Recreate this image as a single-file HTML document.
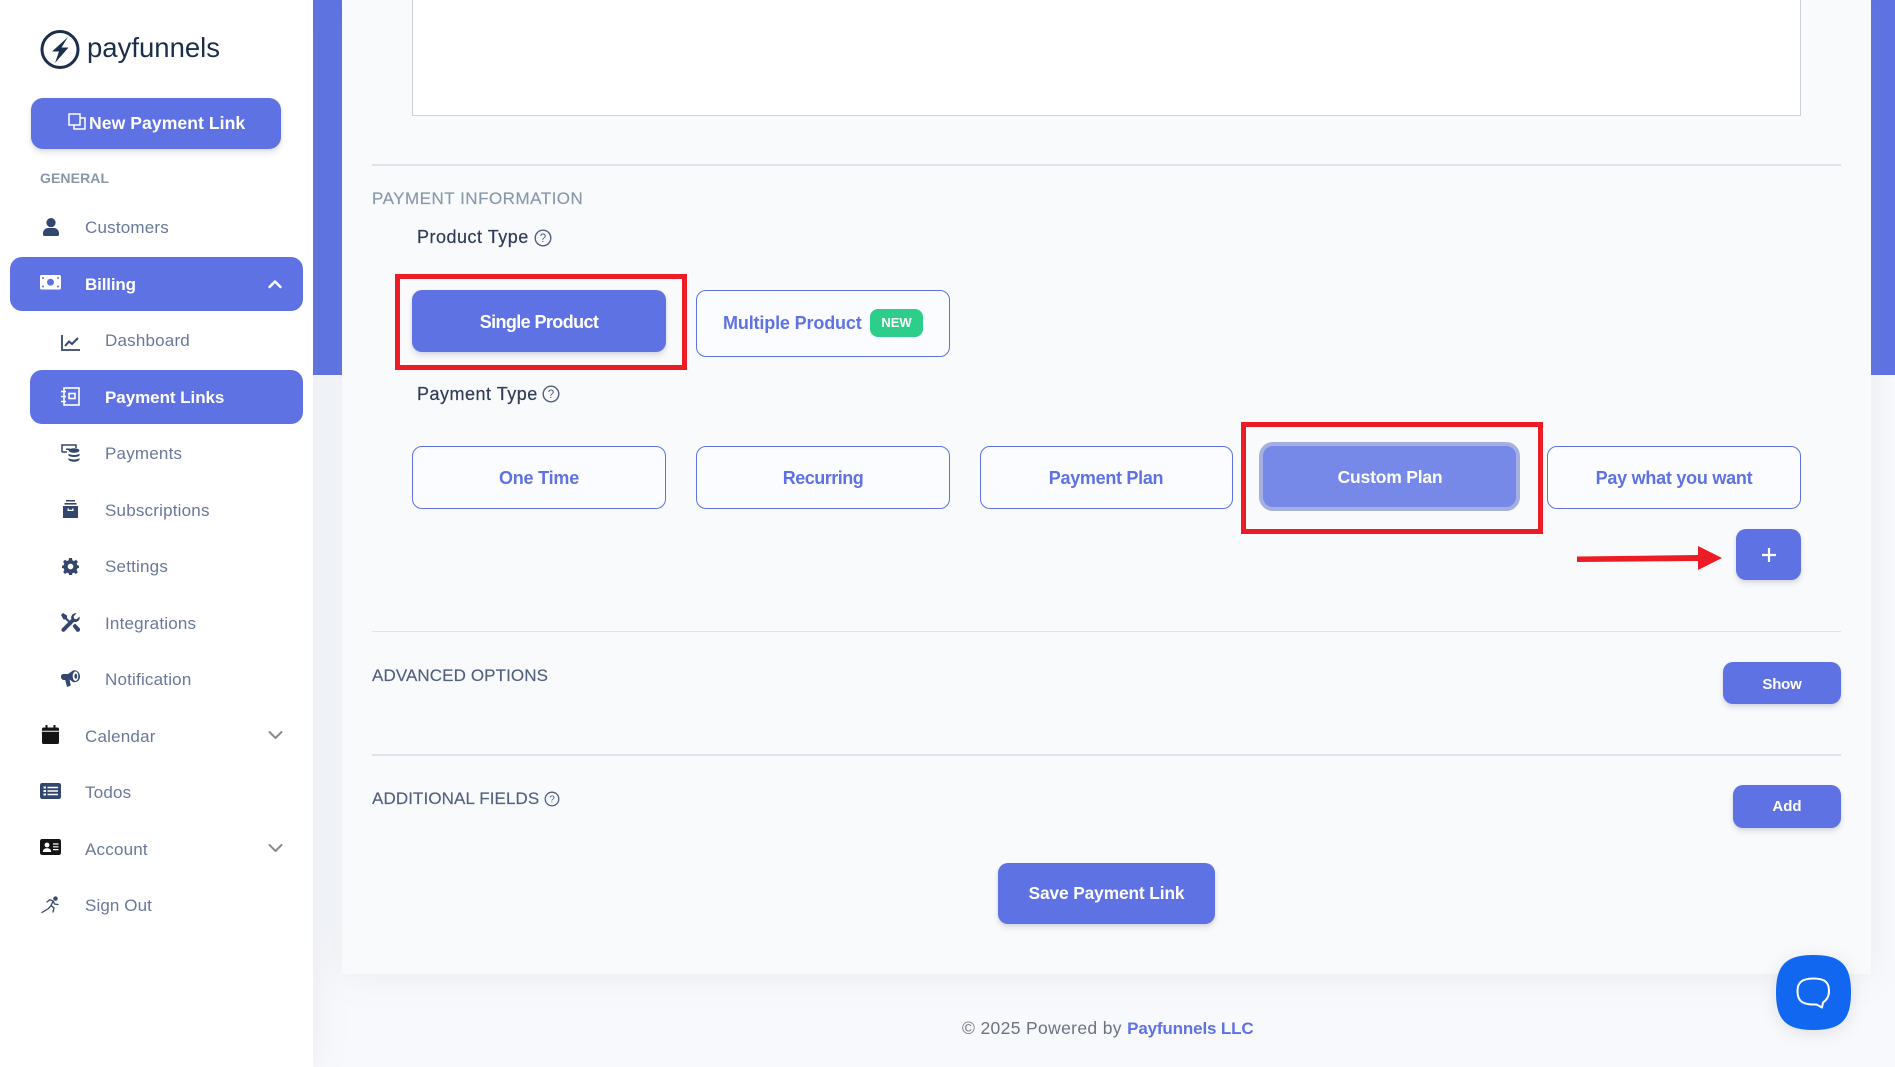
<!DOCTYPE html>
<html lang="en">
<head>
<meta charset="utf-8">
<title>Payfunnels - Payment Link</title>
<style>
*{box-sizing:border-box}
html,body{margin:0;padding:0;width:1895px;height:1067px;overflow:hidden;background:#f8f9fc;font-family:"Liberation Sans",Arial,sans-serif}
.a{position:absolute}
.t{position:absolute;white-space:nowrap;line-height:24px;height:24px}
.c{transform:translateX(-50%)}
.side{left:0;top:0;width:313px;height:1067px;background:#fff;box-shadow:0 0 2rem rgba(136,152,170,.15);z-index:3}
.nav{font-size:17px;color:#69789a;letter-spacing:.2px}
.on{color:#fff;font-weight:700;letter-spacing:-.15px}
.pill{background:#5e72e4;border-radius:12px}
.btn{background:#5e72e4;border-radius:10px;box-shadow:0 4px 6px rgba(50,50,93,.11),0 1px 3px rgba(0,0,0,.08)}
.out{border:1px solid #5e72e4;border-radius:10px;background:#fbfcff}
.bt{font-size:18px;font-weight:700;color:#fff;letter-spacing:-.15px}
.ob{font-size:18px;font-weight:700;color:#5e72e4;letter-spacing:-.2px}
.lab{font-size:18px;color:#2f3b58;letter-spacing:.5px;-webkit-text-stroke:.2px #2f3b58}
.sec{font-size:17px;color:#525f7f;letter-spacing:.1px;-webkit-text-stroke:.15px #525f7f}
.hr{left:372px;width:1469px;height:1.5px;background:#dfe3ec}
.red{border:5px solid #ed1c24}
svg{position:absolute;overflow:visible}
</style>
</head>
<body>

<div class="a" style="left:313px;top:0;width:1582px;height:375px;background:#5e72e4"></div>
<div class="a" style="left:342px;top:0;width:1529px;height:974px;background:#f8fafc;box-shadow:0 0 32px rgba(136,152,170,.15)"></div>

<!-- Sidebar -->
<div class="a side">
  <svg style="left:40px;top:30px" width="40" height="40" viewBox="0 0 40 40">
    <circle cx="20" cy="19.500" r="18" fill="none" stroke="#1b2f4b" stroke-width="3"/>
    <path d="M28 7L12 21.500H19L15 33 28.500 17.500H21.500Z" fill="#1b2f4b"/>
  </svg>
  <div class="t" style="left:87px;top:36px;font-size:27.5px;color:#1b2f4b">payfunnels</div>

  <div class="a pill" style="left:31px;top:98px;width:250px;height:51px;box-shadow:0 4px 6px rgba(50,50,93,.11),0 1px 3px rgba(0,0,0,.08)"></div>
  <svg style="left:68px;top:113px" width="18" height="18" viewBox="0 0 18 18" fill="none" stroke="#fff" stroke-width="1.5">
    <rect x="1" y="1" width="11" height="11"/><path d="M12 5H17V16H6V12"/>
  </svg>
  <div class="t" style="left:89px;top:111px;font-size:17.6px;font-weight:700;color:#fff;letter-spacing:.05px">New Payment Link</div>

  <div class="t" style="left:40px;top:166px;font-size:14px;font-weight:700;color:#8898aa;letter-spacing:.1px">GENERAL</div>

  <svg style="left:43px;top:218px" width="16" height="18" viewBox="0 0 16 18" fill="#32466e">
    <circle cx="8" cy="4.600" r="4.600"/><path d="M0 15.500C0 12 2.500 10 5 10H11C13.500 10 16 12 16 15.500V16.500C16 17.500 15.400 18 14.500 18H1.500C.6 18 0 17.500 0 16.500Z"/>
  </svg>
  <div class="t nav" style="left:85px;top:216px">Customers</div>

  <div class="a pill" style="left:10px;top:257px;width:293px;height:54px"></div>
  <svg style="left:40px;top:275px" width="21" height="15" viewBox="0 0 21 15">
    <path fill-rule="evenodd" fill="#fff" d="M1.500 0H19.500C20.400 0 21 .6 21 1.500V13C21 13.900 20.400 14.500 19.500 14.500H1.500C.6 14.500 0 13.900 0 13V1.500C0 .6.6 0 1.500 0ZM10.500 3.700A3.500 3.500 0 1 0 10.500 10.700 3.500 3.500 0 1 0 10.500 3.700Z"/>
    <circle cx="3" cy="3" r="1" fill="#5e72e4"/><circle cx="18" cy="3" r="1" fill="#5e72e4"/><circle cx="3" cy="11.500" r="1" fill="#5e72e4"/><circle cx="18" cy="11.500" r="1" fill="#5e72e4"/>
  </svg>
  <div class="t nav on" style="left:85px;top:273px">Billing</div>
  <svg style="left:268px;top:279px" width="14" height="10" viewBox="0 0 14 10" fill="none" stroke="#fff" stroke-width="2.400" stroke-linecap="round" stroke-linejoin="round"><path d="M1.500 8L7 2.500 12.500 8"/></svg>

  <svg style="left:61px;top:335px" width="19" height="16" viewBox="0 0 19 16" fill="none" stroke="#32466e">
    <path stroke-width="1.800" d="M1 0V15H19"/><path stroke-width="2" d="M4 11L8 6.500 11 9 17 3"/>
  </svg>
  <div class="t nav" style="left:105px;top:329px">Dashboard</div>

  <div class="a pill" style="left:30px;top:370px;width:273px;height:54px"></div>
  <svg style="left:61px;top:387px" width="19" height="19" viewBox="0 0 19 19" fill="none" stroke="#fff" stroke-width="1.600">
    <rect x="3" y="1" width="15" height="17"/><rect x="8" y="6.500" width="6" height="5"/><path d="M0 4.500H5M0 9.500H5M0 14.500H5"/>
  </svg>
  <div class="t nav on" style="left:105px;top:386px;letter-spacing:-.05px">Payment Links</div>

  <svg style="left:61px;top:444px" width="19" height="18" viewBox="0 0 19 18">
    <path d="M1 8V1H15V4M1 8H6" fill="none" stroke="#32466e" stroke-width="1.500"/>
    <path d="M5 4.500H9V6H5Z" fill="#32466e"/>
    <ellipse cx="13" cy="6.500" rx="5.500" ry="2.300" fill="#32466e"/>
    <path d="M7.500 9.500C9 11.500 17 11.500 18.500 9.500V11.500C17 13.500 9 13.500 7.500 11.500ZM7.500 14C9 16 17 16 18.500 14V15.600C17 18.400 9 18.400 7.500 15.600Z" fill="#32466e"/>
  </svg>
  <div class="t nav" style="left:105px;top:442px">Payments</div>

  <svg style="left:63px;top:500px" width="15" height="18" viewBox="0 0 15 18" fill="#32466e">
    <rect x="3" y="0" width="9" height="1.500"/><rect x="1.500" y="3" width="12" height="1.600"/>
    <path fill-rule="evenodd" d="M0 6H15V18H0ZM4.500 8.500V11H10.500V8.500H9.200V9.800H5.800V8.500Z"/>
  </svg>
  <div class="t nav" style="left:105px;top:499px">Subscriptions</div>

  <svg style="left:62px;top:558px" width="17" height="17" viewBox="0 0 24 24" fill="#32466e">
    <path fill-rule="evenodd" d="M10 0H14L14.700 3.300 17 4.300 19.900 2.500 22.500 5.400 20.700 8 21.600 10.300 24 10.800V14.200L21.600 14.700 20.700 17 22.300 19.900 19.600 22.500 17 20.700 14.700 21.600 14 24H10L9.300 21.600 7 20.700 4.400 22.500 1.700 19.900 3.300 17 2.400 14.700 0 14.200V10.800L2.400 10.300 3.300 8 1.500 5.400 4.100 2.500 7 4.300 9.300 3.300ZM12 8A4 4 0 1 0 12 16 4 4 0 1 0 12 8Z"/>
  </svg>
  <div class="t nav" style="left:105px;top:555px">Settings</div>

  <svg style="left:61px;top:613px" width="19" height="19" viewBox="0 0 19 19" fill="#32466e">
    <path d="M0 2L2 0 6 2.500V5L11.500 10.500 10 12 4.500 6.500H2.500Z"/>
    <path d="M18.500 3.500C19.500 6.500 16.500 10 13 8.700L3.800 18.200C2.600 19.400.5 18.700.4 17.200.3 16.500.6 15.900 1 15.500L10.400 6C9.200 2.600 12.600-.6 15.600.4L12.700 3.200 13.200 5.700 15.700 6.200Z"/>
    <path d="M11.500 13L14 10.500 18.500 15C19.300 15.900 19.300 17.300 18.400 18.200 17.500 19 16.100 19 15.300 18.200Z"/>
  </svg>
  <div class="t nav" style="left:105px;top:612px">Integrations</div>

  <svg style="left:61px;top:670px" width="19" height="17" viewBox="0 0 19 17">
    <path fill="#32466e" d="M0 6.500C0 5 1.200 4 2.500 4H7L12 .5C15 -.5 19 2 19 6.500S15 13 12 12L8.500 9.500 9.800 15.500 6 17 4.200 10H2.500C1.200 10 0 8.500 0 6.500Z"/>
    <ellipse cx="14.500" cy="6.200" rx="2.800" ry="4.800" fill="#fff"/><ellipse cx="14.800" cy="6.200" rx="1.400" ry="2.600" fill="#32466e"/>
  </svg>
  <div class="t nav" style="left:105px;top:668px">Notification</div>

  <svg style="left:42px;top:725px" width="17" height="19" viewBox="0 0 17 19" fill="#141414">
    <rect x="3.500" y="0" width="2" height="3.500"/><rect x="11.500" y="0" width="2" height="3.500"/>
    <path d="M1.500 2.500H15.500C16.400 2.500 17 3.100 17 4V5.800H0V4C0 3.100.6 2.500 1.500 2.500Z"/>
    <path d="M0 6.800H17V17.500C17 18.400 16.400 19 15.500 19H1.500C.6 19 0 18.400 0 17.500Z"/>
  </svg>
  <div class="t nav" style="left:85px;top:725px">Calendar</div>
  <svg style="left:268px;top:730px" width="15" height="10" viewBox="0 0 15 10" fill="none" stroke="#8a8a8a" stroke-width="2" stroke-linecap="round" stroke-linejoin="round"><path d="M1.500 2L7.500 8 13.500 2"/></svg>

  <svg style="left:40px;top:783px" width="21" height="16" viewBox="0 0 21 16">
    <rect width="21" height="16" rx="2.200" fill="#32466e"/>
    <path d="M3.500 3.500H6V5.500H3.500ZM3.500 7H6V9H3.500ZM3.500 10.500H6V12.500H3.500ZM7.500 3.800H18V5.200H7.500ZM7.500 7.300H18V8.700H7.500ZM7.500 10.800H18V12.200H7.500Z" fill="#fff"/>
  </svg>
  <div class="t nav" style="left:85px;top:781px">Todos</div>

  <svg style="left:40px;top:839px" width="21" height="16" viewBox="0 0 21 16">
    <rect width="21" height="16" rx="2.200" fill="#141414"/>
    <circle cx="7" cy="6" r="2.400" fill="#fff"/><path d="M2.800 13C2.800 10.500 4.500 9.300 7 9.300S11.200 10.500 11.200 13Z" fill="#fff"/>
    <path d="M13 5H18.500M13 7.800H18.500M13 10.600H18.500" stroke="#fff" stroke-width="1.200"/>
  </svg>
  <div class="t nav" style="left:85px;top:838px">Account</div>
  <svg style="left:268px;top:843px" width="15" height="10" viewBox="0 0 15 10" fill="none" stroke="#8a8a8a" stroke-width="2" stroke-linecap="round" stroke-linejoin="round"><path d="M1.500 2L7.500 8 13.500 2"/></svg>

  <svg style="left:41px;top:896px" width="18" height="17" viewBox="0 0 18 17" fill="none" stroke="#32466e" stroke-width="1.300" stroke-linejoin="round" stroke-linecap="round">
    <circle cx="14.500" cy="2.600" r="2.200" fill="#32466e" stroke="none"/>
    <path d="M6 6L8.800 3.800 12.200 5 10 9.500 13 12 12 16M10 9.500L7.500 12.500 1 16.500M12.200 5L13.500 8 17 8.500"/>
  </svg>
  <div class="t nav" style="left:85px;top:894px;letter-spacing:.1px">Sign Out</div>
</div>

<!-- Textarea remainder -->
<div class="a" style="left:412px;top:-2px;width:1389px;height:118px;background:#fff;border:1px solid #cdd1d7"></div>

<div class="a hr" style="top:164px"></div>
<div class="t" style="left:372px;top:187px;font-size:17px;color:#8898aa;letter-spacing:.5px;-webkit-text-stroke:.15px #8898aa">PAYMENT INFORMATION</div>

<div class="t lab" style="left:417px;top:225px">Product Type</div>
<svg style="left:534px;top:229px" width="18" height="18" viewBox="0 0 18 18">
  <circle cx="9" cy="9" r="7.800" fill="none" stroke="#525f7f" stroke-width="1.400"/>
  <text x="9" y="13" text-anchor="middle" font-size="11.500" font-family="Liberation Sans" fill="#525f7f">?</text>
</svg>

<div class="a red" style="left:395px;top:274px;width:292px;height:96px"></div>
<div class="a btn" style="left:412px;top:290px;width:254px;height:62px"></div>
<div class="t bt c" style="left:539px;top:310px;letter-spacing:-.6px">Single Product</div>

<div class="a out" style="left:696px;top:290px;width:254px;height:67px"></div>
<div class="t ob" style="left:723px;top:311px;letter-spacing:-.15px">Multiple Product</div>
<div class="a" style="left:870px;top:309px;width:53px;height:28px;background:#2dce89;border-radius:8px"></div>
<div class="t c" style="left:896.500px;top:311px;font-size:13px;font-weight:700;color:#fff">NEW</div>

<div class="t lab" style="left:417px;top:382px">Payment Type</div>
<svg style="left:542px;top:385px" width="18" height="18" viewBox="0 0 18 18">
  <circle cx="9" cy="9" r="7.800" fill="none" stroke="#525f7f" stroke-width="1.400"/>
  <text x="9" y="13" text-anchor="middle" font-size="11.500" font-family="Liberation Sans" fill="#525f7f">?</text>
</svg>

<div class="a out" style="left:412px;top:446px;width:254px;height:63px"></div>
<div class="t ob c" style="left:539px;top:465.500px">One Time</div>
<div class="a out" style="left:696px;top:446px;width:254px;height:63px"></div>
<div class="t ob c" style="left:823px;top:465.500px;letter-spacing:-.5px">Recurring</div>
<div class="a out" style="left:980px;top:446px;width:253px;height:63px"></div>
<div class="t ob c" style="left:1106px;top:465.500px;letter-spacing:-.3px">Payment Plan</div>

<div class="a red" style="left:1241px;top:422px;width:302px;height:112px"></div>
<div class="a" style="left:1259px;top:442px;width:261px;height:69px;background:#7789e8;border:4px solid #a5afe1;border-radius:14px"></div>
<div class="t bt c" style="left:1390px;top:465px;font-size:17.500px;letter-spacing:-.2px">Custom Plan</div>

<div class="a out" style="left:1547px;top:446px;width:254px;height:63px"></div>
<div class="t ob c" style="left:1674px;top:465.500px;letter-spacing:-.25px">Pay what you want</div>

<svg style="left:1577px;top:545px" width="146" height="26" viewBox="0 0 146 26">
  <path d="M0 11.500L121 10V1L145 13 121 25V16L0 17Z" fill="#ed1c24"/>
</svg>
<div class="a btn" style="left:1736px;top:529px;width:65px;height:51px"></div>
<svg style="left:1762px;top:548px" width="14" height="14" viewBox="0 0 14 14"><path d="M7 0V14M0 7H14" stroke="#fff" stroke-width="2.200"/></svg>

<div class="a hr" style="top:630.500px"></div>
<div class="t sec" style="left:372px;top:664px">ADVANCED OPTIONS</div>
<div class="a btn" style="left:1723px;top:662px;width:118px;height:42px"></div>
<div class="t c" style="left:1782px;top:672.500px;font-size:15px;font-weight:700;color:#fff;letter-spacing:-.2px">Show</div>

<div class="a hr" style="top:754px"></div>
<div class="t sec" style="left:372px;top:787px;letter-spacing:.1px">ADDITIONAL FIELDS</div>
<svg style="left:544px;top:791px" width="16" height="16" viewBox="0 0 16 16">
  <circle cx="8" cy="8" r="6.800" fill="none" stroke="#525f7f" stroke-width="1.300"/>
  <text x="8" y="11.700" text-anchor="middle" font-size="10" font-family="Liberation Sans" fill="#525f7f">?</text>
</svg>
<div class="a btn" style="left:1733px;top:785px;width:108px;height:43px"></div>
<div class="t c" style="left:1787px;top:795px;font-size:15px;font-weight:700;color:#fff">Add</div>

<div class="a btn" style="left:998px;top:863px;width:217px;height:61px"></div>
<div class="t bt c" style="left:1106.500px;top:881px;font-size:17.300px;letter-spacing:-.1px">Save Payment Link</div>

<div class="t" style="left:962px;top:1016px;font-size:17.500px;color:#6b7280;letter-spacing:.35px">© 2025 Powered by <span style="font-size:17px;font-weight:700;color:#5e72e4;letter-spacing:-.15px">Payfunnels LLC</span></div>

<!-- Chat launcher -->
<svg style="left:1776px;top:955px;filter:drop-shadow(0 3px 8px rgba(0,0,0,.1))" width="75" height="75" viewBox="0 0 75 75">
  <path d="M37.500 0C65 0 75 10 75 37.500S65 75 37.500 75 0 65 0 37.500 10 0 37.500 0Z" fill="#1167f0"/>
  <path d="M37.500 23.500C49 23.500 53 27.500 53 36 53 41 51.500 44.500 47 47.500L46 52.500 40.500 49.500C26 50 21.500 46 21.500 36 21.500 27.500 26 23.500 37.500 23.500Z" fill="none" stroke="#fff" stroke-width="2" stroke-linejoin="round"/>
</svg>

</body>
</html>
